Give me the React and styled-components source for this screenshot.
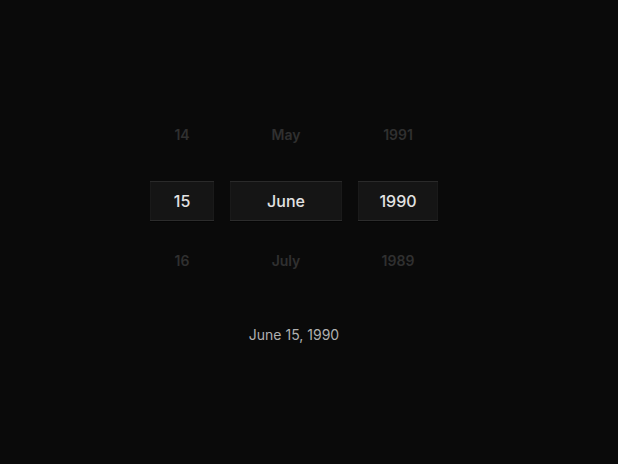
import React from "react";
import styled, { createGlobalStyle } from "styled-components";

const Global = createGlobalStyle`
  html, body { margin: 0; padding: 0; background: #0a0a0a; }
  body { font-family: Inter, "Helvetica Neue", Arial, sans-serif; -webkit-font-smoothing: antialiased; }
`;

const Page = styled.div`
  width: 618px;
  height: 464px;
  box-sizing: border-box;
  padding: 114px 30px 0 0;
  display: flex;
  flex-direction: column;
  align-items: center;
  background: #0a0a0a;
`;

const Wheels = styled.div`
  display: flex;
  gap: 16px;
`;

const Column = styled.div`
  width: ${(p) => p.$w}px;
  display: flex;
  flex-direction: column;
  align-items: stretch;
`;

const Item = styled.div`
  height: 40px;
  display: flex;
  align-items: center;
  justify-content: center;
  font-size: 14px;
  font-weight: 600;
  color: #303030;
  margin-top: ${(p) => p.$mt || 0}px;
  margin-bottom: ${(p) => p.$mb || 0}px;
`;

const Selected = styled.div`
  height: 38px;
  display: flex;
  align-items: center;
  justify-content: center;
  font-size: 16px;
  font-weight: 500;
  color: #e2e2e2;
  background: #151515;
  border-top: 1px solid #2a2a2a;
  border-bottom: 1px solid #2c2c2c;
  box-shadow: 0 1px 0 #050505, inset 1px 0 0 #1a1a1a, inset -1px 0 0 #1a1a1a;
`;

const Caption = styled.div`
  margin-top: 45px;
  font-size: 14px;
  line-height: 20px;
  color: #b0b0b0;
`;

const columns = [
  { w: 64, items: ["14", "15", "16"] },
  { w: 112, items: ["May", "June", "July"] },
  { w: 80, items: ["1991", "1990", "1989"] },
];

export default function App() {
  return (
    <>
      <Global />
      <Page>
        <Wheels>
          {columns.map((c) => (
            <Column key={c.items[1]} $w={c.w}>
              <Item $mb={27}>{c.items[0]}</Item>
              <Selected>{c.items[1]}</Selected>
              <Item $mt={19}>{c.items[2]}</Item>
            </Column>
          ))}
        </Wheels>
        <Caption>June 15, 1990</Caption>
      </Page>
    </>
  );
}
